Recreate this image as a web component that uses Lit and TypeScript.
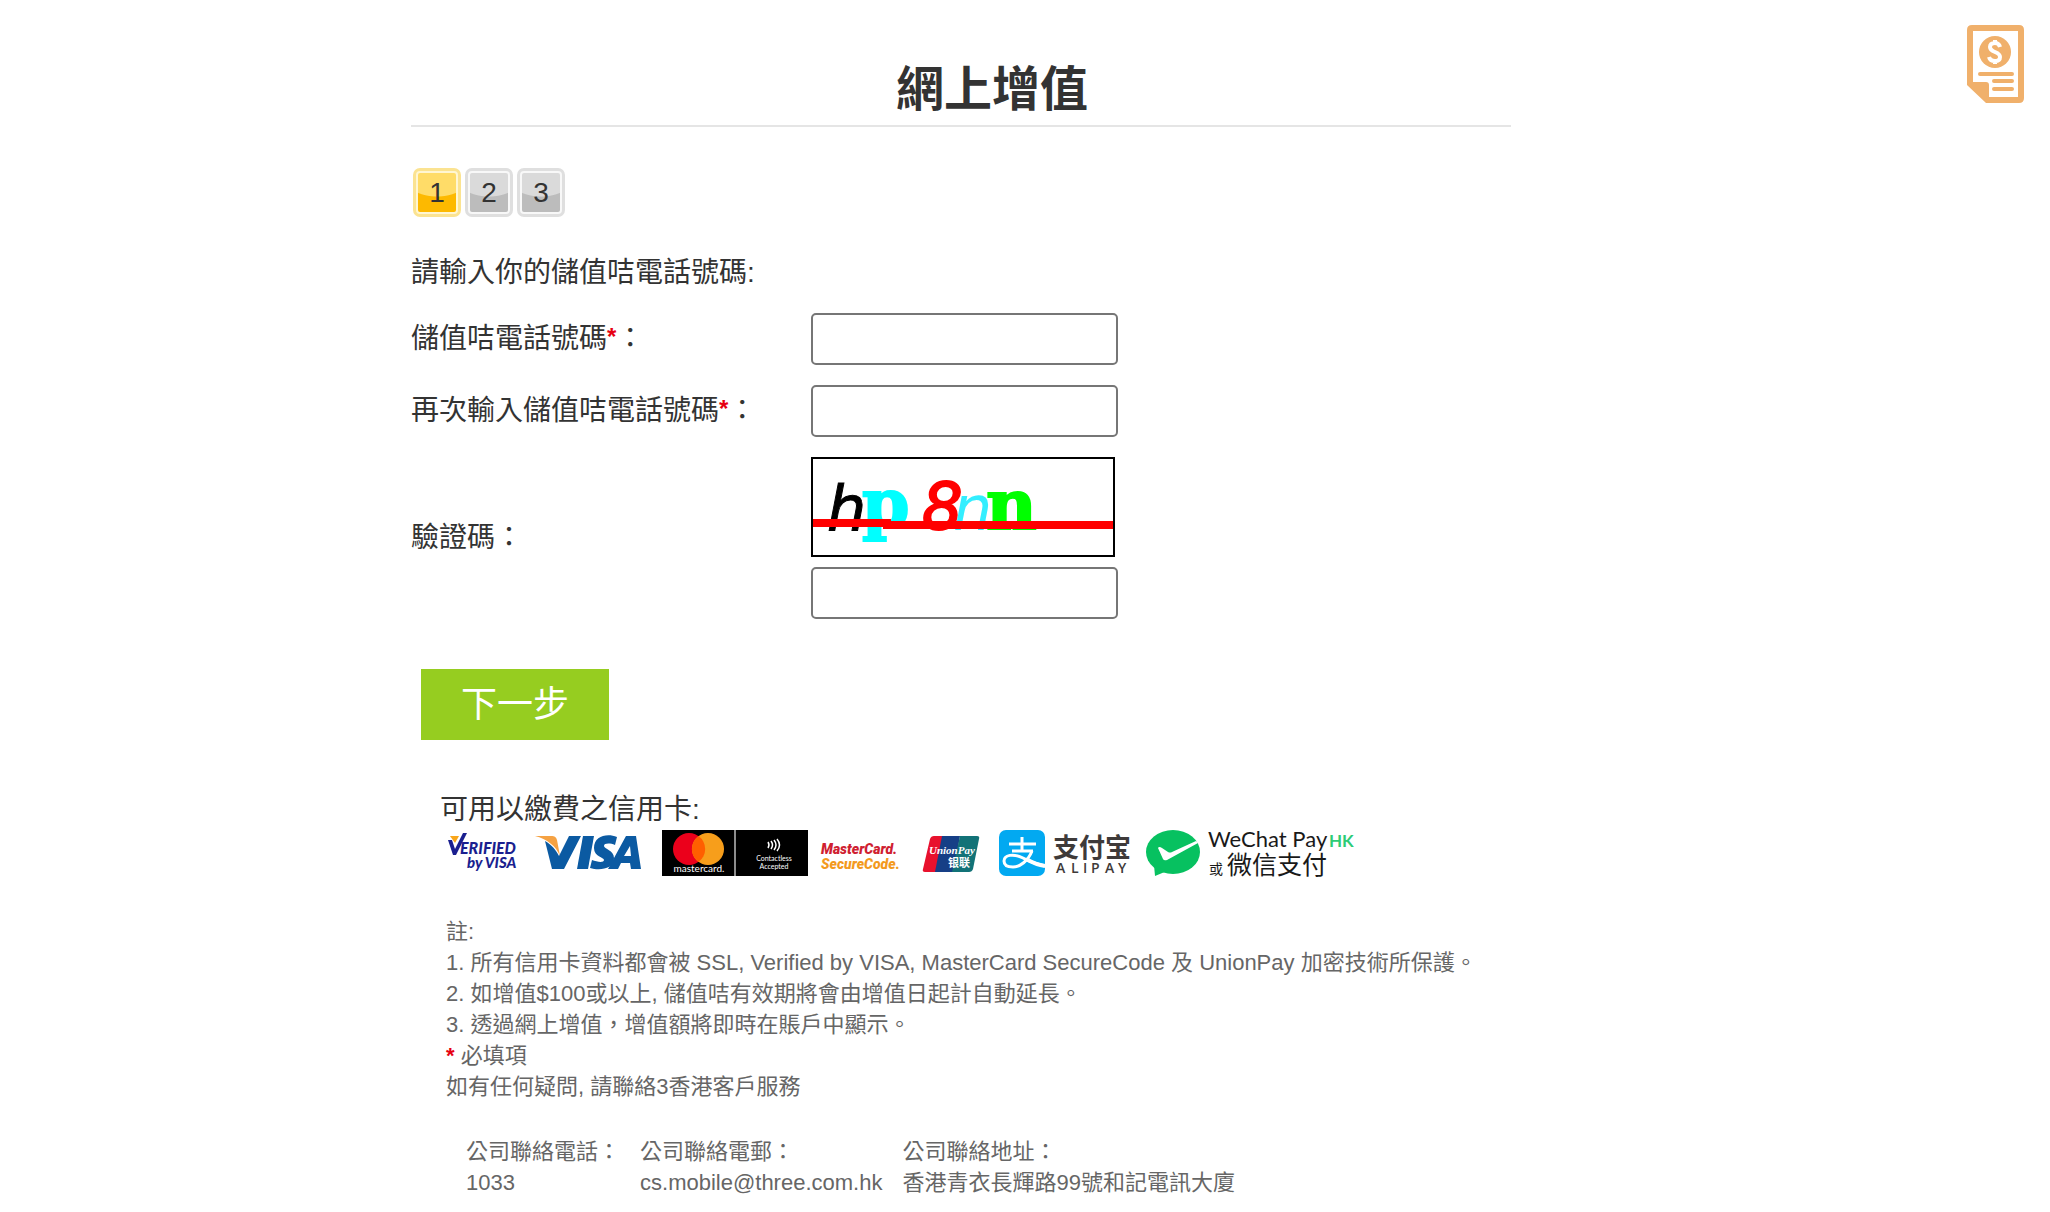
import { LitElement, html, css, svg } from "lit";
import { customElement } from "lit/decorators.js";

@customElement("payment-logos")
class PaymentLogos extends LitElement {
  static styles = css`
    :host {
      display: block;
    }
    .row {
      display: flex;
      flex-wrap: wrap;
      align-items: center;
    }
    svg {
      display: block;
      height: 46px;
      flex: none;
      overflow: visible;
    }
    .vbv { margin-left: 7px; }
    .visa { margin-left: 18px; }
    .mc { margin-left: 20px; }
    .sc { margin-left: 13px; }
    .up { margin-left: 23px; }
    .ali { margin-left: 18px; }
    .wc { margin-left: 15px; }
  `;

  render() {
    return html`
      <div class="row">
        <svg class="vbv" width="70" viewBox="0 0 70 46" role="img" aria-label="Verified by Visa">
          <path d="M3 6h9l-4 7z" fill="#f9a61a" />
          <path d="M1 10h4l3 9L16 3h4L9 25H6z" fill="#1a1f8f" />
          <g fill="#1a1f8f" font-family="Lato, sans-serif" font-weight="900" font-style="italic">
            <text x="13" y="24" font-size="16">ERIFIED</text>
            <text x="20" y="38" font-size="15">by VISA</text>
          </g>
        </svg>
        <svg class="visa" width="107" viewBox="0 0 107 46" role="img" aria-label="Visa">
          <path d="M0 6h16c4 0 5 1 6 4l3 16C21 16 12 9 0 6z" fill="#f5a243" />
          <path d="M10 11c7 4 11 9 14 15L34 6h12L29 39H17z" fill="#0b5aa2" />
          <path d="M48 6h11l-6 33H42z" fill="#0b5aa2" />
          <path d="M82 7l-2 8c-5-2-11-2-11 1 0 3 10 4 10 12 0 11-14 13-24 10l2-8c5 2 12 3 12 0 0-3-10-3-10-12C59 6 72 3 82 7z" fill="#0b5aa2" />
          <path d="M91 6h10l5 33H96l-1-6H86l-3 6H73zM95 16l-6 10h7z" fill="#0b5aa2" fill-rule="evenodd" />
        </svg>
        <svg class="mc" width="146" viewBox="0 0 146 46" role="img" aria-label="Mastercard, contactless accepted">
          <rect width="146" height="46" />
          <rect x="72" width="2" height="46" fill="#8c8c8c" />
          <circle cx="27" cy="19" r="16" fill="#eb001b" />
          <circle cx="46" cy="19" r="16" fill="#f79e1b" />
          <path d="M36.500 6a16 16 0 0 1 0 26 16 16 0 0 1 0-26z" fill="#ff5f00" />
          <g fill="#fff" font-family="Lato, sans-serif" text-anchor="middle">
            <text x="37" y="42" font-size="10">mastercard.</text>
            <text x="112" y="31" font-size="7">Contactless</text>
            <text x="112" y="39" font-size="7">Accepted</text>
          </g>
          <g fill="none" stroke="#fff" stroke-width="1.500">
            <path d="M106 12q2 3 0 6M109 11q3 4 0 8M112 10q4 5 0 10M115 9q5 6 0 12" />
          </g>
        </svg>
        <svg class="sc" width="78" viewBox="0 0 78 46" role="img" aria-label="MasterCard SecureCode">
          <g font-family="Roboto, sans-serif" font-weight="900" font-style="italic" font-size="14">
            <text x="0" y="24" fill="#cf2030">MasterCard.</text>
            <text x="0" y="39" fill="#f39a1e">SecureCode.</text>
          </g>
        </svg>
        <svg class="up" width="59" viewBox="0 0 59 46" role="img" aria-label="UnionPay">
          <path d="M12 6h10l-6 36H3q-3 0-2-3L8 9q1-3 4-3z" fill="#e8112d" />
          <path d="M20 6h18l-6 36H13z" fill="#163f86" />
          <path d="M38 6h17q3 0 2 3l-6 30q-1 3-4 3H30z" fill="#127277" />
          <g fill="#fff" font-weight="700">
            <text x="7" y="24" font-family="Liberation Serif, serif" font-style="italic" font-size="11">UnionPay</text>
            <text x="26" y="37" font-family="Noto Sans CJK SC, sans-serif" font-size="11">银联</text>
          </g>
        </svg>
        <svg class="ali" width="132" viewBox="0 0 132 46" role="img" aria-label="支付宝 Alipay">
          <rect width="46" height="46" rx="7" fill="#02a9f1" />
          <g fill="none" stroke="#fff">
            <path d="M10 14h27M23 7v14M13 21h21" stroke-width="3" />
            <path d="M33 21c-4 10-12 16-19 16-7 0-9-3-9-6 0-6 9-8 19-3 7 4 14 6 22 8" stroke-width="3" />
            <path d="M27 29c7 4 12 6 19 7" stroke-width="4" />
          </g>
          <text x="54" y="27" font-family="Noto Sans CJK SC, sans-serif" font-weight="700" font-size="26" fill="#3e3a39">支付宝</text>
          <g font-family="Open Sans, sans-serif" font-weight="600" font-size="14" fill="#3e3a39">
            <text x="57 72 84 92 106 119" y="43">ALIPAY</text>
          </g>
        </svg>
        <svg class="wc" width="208" viewBox="0 0 208 46" role="img" aria-label="WeChat Pay HK 或微信支付">
          <ellipse cx="27" cy="22" rx="27" ry="22" fill="#07c160" />
          <path d="M8 35l1 11 12-5z" fill="#07c160" />
          <path d="M12 18q1-2 4 0l6 4q2 1 4 0l24-11q2 1 2 2L21 30q-3 1-4-1z" fill="#fff" />
          <g fill="#191919">
            <text x="62" y="17" font-family="Lato, sans-serif" font-size="22">WeChat Pay</text>
            <text x="63" y="44" font-family="Noto Sans CJK SC, sans-serif" font-size="14">或</text>
            <text x="81" y="44" font-family="Noto Sans CJK SC, sans-serif" font-size="25">微信支付</text>
          </g>
          <text x="183" y="17" font-family="Lato, sans-serif" font-weight="700" font-size="17" fill="#2dcb76">HK</text>
        </svg>
      </div>
    `;
  }
}

@customElement("app-root")
class AppRoot extends LitElement {
  static styles = css`
    :host {
      display: block;
      background: #fff;
      color: #333;
      font: 28px/36px "Liberation Sans", "Noto Sans CJK TC", sans-serif;
    }
    * {
      box-sizing: border-box;
    }
    .page {
      position: relative;
      padding: 62px 128px 12px 0;
    }
    .bill {
      position: absolute;
      top: 25px;
      right: 26px;
      display: block;
    }
    .bill svg,
    .captcha {
      display: block;
    }
    main {
      max-width: 1100px;
      margin: 0 auto;
    }
    h1 {
      margin: 0;
      padding: 0 0 7px 62px;
      border-bottom: 2px solid #e5e5e5;
      font-size: 48px;
      line-height: 56px;
      font-weight: 700;
      text-align: center;
    }
    .steps {
      display: flex;
      gap: 4px;
      margin: 41px 0 0;
      padding: 0 2px;
      list-style: none;
    }
    .step {
      width: 48px;
      height: 49px;
      border: 3px solid #dfdfdf;
      border-radius: 7px;
      padding: 2px;
      line-height: 40px;
      text-align: center;
      background: radial-gradient(ellipse 36px 24px at 50% 0, #dadada 96%, #bcbcbc 100%) content-box, #f8f8f8;
    }
    .step.active {
      border-color: #fbe391;
      background: radial-gradient(ellipse 36px 24px at 50% 0, #ffdc68 96%, #fdb900 100%) content-box, #fff6d2;
    }
    .intro {
      margin: 38px 0 0;
    }
    .fields {
      display: grid;
      grid-template-columns: 400px 1fr;
      row-gap: 20px;
      align-items: center;
      margin-top: 22px;
    }
    .req {
      color: #e60012;
      font-weight: 700;
    }
    label .req {
      font-size: 24px;
      line-height: 24px;
      vertical-align: 3px;
    }
    .control {
      display: flex;
      flex-direction: column;
      align-items: flex-start;
      gap: 10px;
    }
    input {
      width: 307px;
      height: 52px;
      border: 2px solid #767676;
      border-radius: 5px;
      padding: 2px 8px;
      background: #fff;
      font: inherit;
      color: inherit;
    }
    .next {
      display: block;
      margin: 50px 0 0 10px;
      padding: 0 40px;
      height: 71px;
      border: 0;
      background: #96cd20;
      color: #fff;
      font: inherit;
      font-size: 36px;
    }
    .cards {
      margin: 52px 0 0 29px;
    }
    .cards p {
      margin: 0 0 2px;
    }
    .notes {
      margin: 40px 0 0 35px;
      color: #666;
      font-size: 22px;
      line-height: 31px;
    }
    .notes p {
      margin: 0;
    }
    .contact {
      display: flex;
      flex-wrap: wrap;
      gap: 20px;
      margin: 34px 0 0 20px;
    }
    .contact dt,
    .contact dd {
      margin: 0;
    }
  `;

  render() {
    return html`
      <div class="page">
        <a class="bill" href="#bill" aria-label="帳單">
          <svg width="57" height="78" viewBox="0 0 57 78">
            <path d="M5 0h47q5 0 5 5v68q0 5-5 5H19L0 60V5q0-5 5-5zM6 6v51h13q3 0 3 3v12h29V6z" fill="#f0b06b" fill-rule="evenodd" />
            <circle cx="28" cy="27" r="16" fill="#f0b06b" />
            <path d="M33 22q-1-4-5-4-5 0-5 4 0 3 5 5t5 5q0 4-5 4-5 0-6-4M28 15v3M28 36v3" fill="none" stroke="#fff" stroke-width="4" />
            <path d="M13 49h32M27 56h18M27 64h18" stroke="#f0b06b" stroke-width="4" stroke-linecap="round" />
          </svg>
        </a>
        <main>
          <h1>網上增值</h1>
          <ol class="steps">
            <li class="step active" aria-current="step">1</li>
            <li class="step">2</li>
            <li class="step">3</li>
          </ol>
          <form @submit=${(e: Event) => e.preventDefault()}>
            <p class="intro">請輸入你的儲值咭電話號碼:</p>
            <div class="fields">
              <label for="phone">儲值咭電話號碼<span class="req">*</span>：</label>
              <div class="control"><input id="phone" type="tel" /></div>
              <label for="phone2">再次輸入儲值咭電話號碼<span class="req">*</span>：</label>
              <div class="control"><input id="phone2" type="tel" /></div>
              <label for="code">驗證碼：</label>
              <div class="control">
                ${this.captcha()}
                <input id="code" type="text" autocomplete="off" />
              </div>
            </div>
            <button class="next" type="submit">下一步</button>
          </form>
          <section class="cards">
            <p>可用以繳費之信用卡:</p>
            <payment-logos></payment-logos>
          </section>
          <section class="notes">
            <p>註:</p>
            <p>1. 所有信用卡資料都會被 SSL, Verified by VISA, MasterCard SecureCode 及 UnionPay 加密技術所保護。</p>
            <p>2. 如增值$100或以上, 儲值咭有效期將會由增值日起計自動延長。</p>
            <p>3. 透過網上增值，增值額將即時在賬戶中顯示。</p>
            <p><span class="req">*</span> 必填項</p>
            <p>如有任何疑問, 請聯絡3香港客戶服務</p>
            <dl class="contact">
              <div><dt>公司聯絡電話：</dt><dd>1033</dd></div>
              <div><dt>公司聯絡電郵：</dt><dd>cs.mobile@three.com.hk</dd></div>
              <div><dt>公司聯絡地址：</dt><dd>香港青衣長輝路99號和記電訊大廈</dd></div>
            </dl>
          </section>
        </main>
      </div>
    `;
  }

  private captcha() {
    return html`
      <svg class="captcha" width="304" height="100" viewBox="0 0 304 100" role="img" aria-label="驗證碼">
        <rect x="1" y="1" width="302" height="98" fill="#fff" stroke="#000" stroke-width="2" />
        ${svg`
          <text x="16" y="73" font-family="DejaVu Sans, sans-serif" font-style="italic" font-size="62" stroke="#000">h</text>
          <text x="51" y="70" font-family="DejaVu Serif, serif" font-weight="700" font-size="68" fill="#0ff" stroke="#0ff" stroke-width="2">p</text>
          <text x="111" y="72" font-family="DejaVu Sans, sans-serif" font-style="italic" font-size="64" fill="#f00" stroke="#f00" stroke-width="2">8</text>
          <text x="142" y="73" font-family="DejaVu Sans, sans-serif" font-style="italic" font-size="62" fill="#3ef">n</text>
          <text x="175" y="72" font-family="DejaVu Serif, serif" font-weight="700" font-size="70" fill="#0f0" stroke="#0f0" stroke-width="2">n</text>
        `}
        <path d="M2 66h74v2h226" fill="none" stroke="#f00" stroke-width="8" />
      </svg>
    `;
  }
}
